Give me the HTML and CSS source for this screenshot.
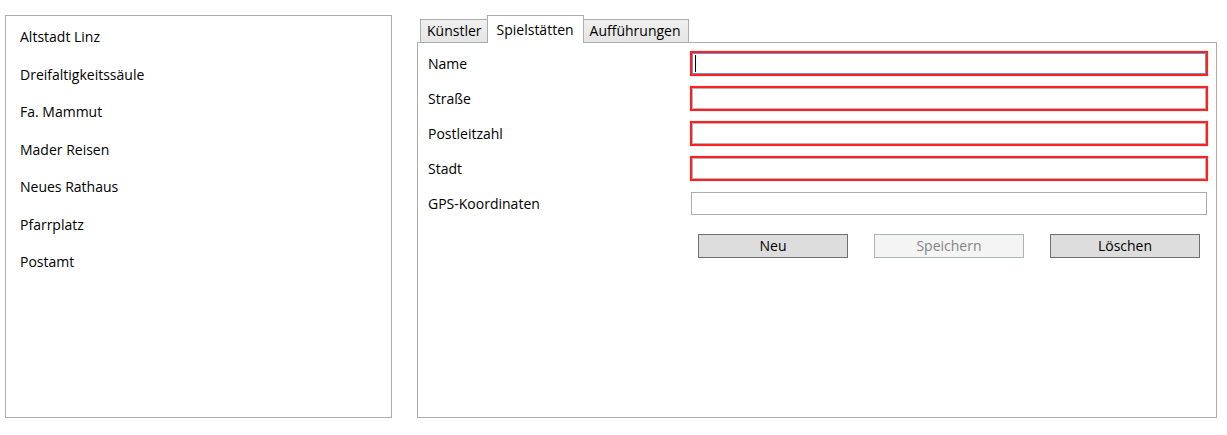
FILE: index.html
```html
<!DOCTYPE html>
<html lang="de">
<head>
<meta charset="utf-8">
<title>Spielstätten</title>
<link rel="stylesheet" href="styles.css">
</head>
<body>
<div class="app">
  <div class="list">
    <div class="item">Altstadt Linz</div>
    <div class="item">Dreifaltigkeitssäule</div>
    <div class="item">Fa. Mammut</div>
    <div class="item">Mader Reisen</div>
    <div class="item">Neues Rathaus</div>
    <div class="item">Pfarrplatz</div>
    <div class="item">Postamt</div>
  </div>
  <div class="tabcontrol">
    <div class="tabs">
      <div class="tab">Künstler</div>
      <div class="tab selected">Spielstätten</div>
      <div class="tab">Aufführungen</div>
    </div>
    <div class="panel">
      <div class="form">
        <div class="label">Name</div>
        <div class="input error focused"><span class="caret"></span></div>
        <div class="label">Straße</div>
        <div class="input error"></div>
        <div class="label">Postleitzahl</div>
        <div class="input error"></div>
        <div class="label">Stadt</div>
        <div class="input error"></div>
        <div class="label">GPS-Koordinaten</div>
        <div class="input plain"></div>
        <div class="buttons">
          <div class="btn">Neu</div>
          <div class="btn disabled">Speichern</div>
          <div class="btn">Löschen</div>
        </div>
      </div>
    </div>
  </div>
</div>
</body>
</html>
```
FILE: styles.css
```css
html, body {
  margin: 0;
  padding: 0;
  background: #ffffff;
}
body {
  font-family: "Open Sans", "Noto Sans", "DejaVu Sans", sans-serif;
  font-size: 14px;
  color: #000000;
}
.app {
  display: flex;
  gap: 25px;
  padding: 15px 10px 17px 5px;
  height: 435px;
  box-sizing: border-box;
}
.list {
  width: 387px;
  box-sizing: border-box;
  border: 1px solid #acacac;
  padding: 2px 0 0 14px;
}
.item {
  height: 37.5px;
  line-height: 37.5px;
  white-space: nowrap;
}
.tabcontrol {
  flex: 1;
  display: flex;
  flex-direction: column;
}
.tabs {
  height: 27px;
  display: flex;
  align-items: flex-end;
  padding-left: 3px;
}
.tab {
  height: 23px;
  box-sizing: border-box;
  border: 1px solid #acacac;
  border-bottom: none;
  background: linear-gradient(#f0f0f0, #e5e5e5);
  padding: 0 6px;
  line-height: 22px;
  white-space: nowrap;
}
.tab + .tab {
  border-left: none;
}
.tab:last-child {
  padding: 0 7px;
}
.tab.selected {
  height: 28px;
  margin: 0 -2px -1px -2px;
  padding: 0 9px;
  line-height: 27px;
  background: #ffffff;
  border-left: 1px solid #acacac;
  position: relative;
  z-index: 1;
}
.tab.selected + .tab {
  border-left: 1px solid #acacac;
}
.panel {
  flex: 1;
  border: 1px solid #acacac;
  background: #ffffff;
  padding: 8px 8px 0 10px;
}
.form {
  display: grid;
  grid-template-columns: 262px 1fr;
  grid-template-rows: repeat(5, 25px) auto;
  row-gap: 10px;
  align-items: center;
}
.label {
  white-space: nowrap;
}
.input {
  height: 25px;
  box-sizing: border-box;
  background: #ffffff;
  position: relative;
}
.input.error {
  border: 2px solid #ff2020;
  box-shadow: inset 0 0 0 1px #b4b4b8, 0 0 1px #ff9090;
}
.input.focused {
  box-shadow: inset 0 0 0 1px #6b8fd8, 0 0 1px #ff9090;
}
.input.plain {
  height: 23px;
  margin: 0 1px;
  border: 1px solid #abadb3;
}
.caret {
  position: absolute;
  left: 3px;
  top: 2px;
  width: 1px;
  height: 17px;
  background: #000000;
}
.buttons {
  grid-column: 2;
  align-self: start;
  margin-top: 8px;
  display: flex;
  justify-content: space-between;
  padding: 0 8px;
}
.btn {
  width: 150px;
  height: 24px;
  box-sizing: border-box;
  border: 1px solid #707070;
  background: #dddddd;
  text-align: center;
  line-height: 22px;
}
.btn.disabled {
  border-color: #adb2b5;
  background: #f4f4f4;
  color: #838383;
}
```
